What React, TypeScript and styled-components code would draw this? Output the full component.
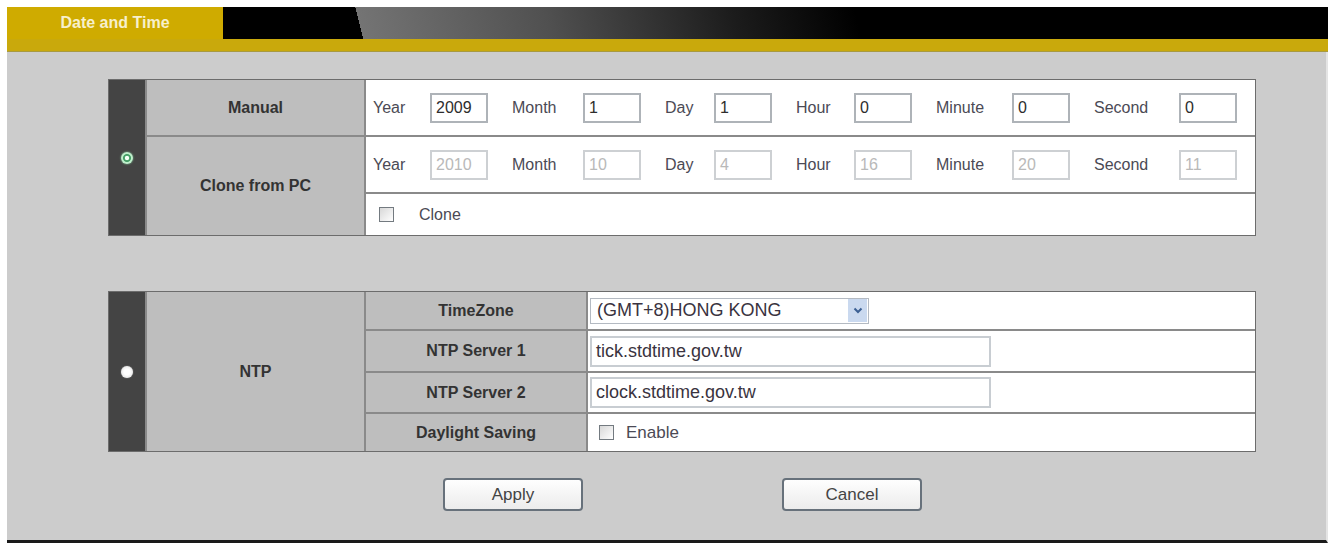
import React from "react";
import styled, { createGlobalStyle } from "styled-components";

const Global = createGlobalStyle`
  html, body { margin: 0; padding: 0; background: #ffffff; }
  body { font-family: "Liberation Sans", Arial, sans-serif; }
  * { box-sizing: border-box; }
`;

const Frame = styled.div`
  margin: 7px 1px 0 7px;
  width: 1321px;
`;

const Header = styled.div`
  display: flex;
  height: 32px;
  background: #000;
`;

const Tab = styled.div`
  width: 216px;
  background: #cfab00;
  color: #f7f0cc;
  font-weight: bold;
  font-size: 16px;
  display: flex;
  align-items: center;
  justify-content: center;
  padding-bottom: 1px;
`;

const Banner = styled.div`
  flex: 1;
  background: linear-gradient(
    76deg,
    #000 0,
    #000 136px,
    #747474 136px,
    #505050 320px,
    #1c1c1c 500px,
    #000 620px
  );
`;

const Stripe = styled.div`
  height: 13px;
  background: #c9a90c;
  border-bottom: 1px solid #a89a40;
`;

const Content = styled.div`
  background: #cccccc;
  padding: 27px 0 29px 101px;
  border-bottom: 3px solid #1a1a1a;
  border-right: 2px solid #e4e4e4;
`;

const Grid = styled.div<{ $cols: string; $rows: string }>`
  width: 1148px;
  display: grid;
  grid-template-columns: ${(p) => p.$cols};
  grid-template-rows: ${(p) => p.$rows};
  gap: 2px;
  background: #8a8a8a;
  border: 1px solid #6c6c6c;
`;

const DarkCell = styled.div<{ $span: number }>`
  grid-row: 1 / span ${(p) => p.$span};
  background: #444444;
  display: flex;
  align-items: center;
  justify-content: center;
`;

const LabelCell = styled.div<{ $span?: number }>`
  grid-row: span ${(p) => p.$span || 1};
  background: #bebebe;
  color: #333;
  font-weight: bold;
  font-size: 16px;
  display: flex;
  align-items: center;
  justify-content: center;
`;

const ValueCell = styled.div<{ $pad?: number }>`
  background: #ffffff;
  display: flex;
  align-items: center;
  min-width: 0;
  padding-left: ${(p) => p.$pad ?? 7}px;
`;

const Radio = styled.span<{ $on?: boolean }>`
  width: 12px;
  height: 12px;
  border-radius: 50%;
  display: block;
  background: ${(p) =>
    p.$on
      ? "radial-gradient(circle, #f4fff6 0 1.8px, #47a068 2.6px 3.6px, #bff0cc 4.4px)"
      : "radial-gradient(circle, #ffffff 0 3px, #f0f0f0 5px)"};
  box-shadow: ${(p) => (p.$on ? "0 0 2px #8fdcaa" : "0 0 1px #ddd")};
`;

const FieldLabel = styled.span<{ $w: number }>`
  width: ${(p) => p.$w}px;
  flex: none;
  font-size: 16px;
  color: #4b4a55;
`;

const NumInput = styled.div<{ $disabled?: boolean }>`
  width: 58px;
  height: 30px;
  flex: none;
  margin-right: 24px;
  border: 2px solid ${(p) => (p.$disabled ? "#cdd0d3" : "#aeb3b8")};
  background: #fff;
  color: ${(p) => (p.$disabled ? "#b9b9b9" : "#2d2d2d")};
  font-size: 16px;
  display: flex;
  align-items: center;
  padding-left: 4px;
  &:last-child {
    margin-right: 0;
  }
`;

const Check = styled.span`
  width: 15px;
  height: 15px;
  flex: none;
  border: 1px solid #737a80;
  background: linear-gradient(135deg, #d8d8d8, #ffffff);
`;

const CheckText = styled.span<{ $gap: number; $size: number }>`
  margin-left: ${(p) => p.$gap}px;
  font-size: ${(p) => p.$size}px;
  color: #4b4a55;
`;

const Select = styled.div`
  width: 279px;
  height: 26px;
  border: 1px solid #b4bac2;
  display: flex;
  align-items: center;
  justify-content: space-between;
  padding-left: 6px;
  font-size: 18px;
  color: #3a3340;
`;

const Arrow = styled.span`
  width: 19px;
  height: 23px;
  background: #cad9ef;
  display: flex;
  align-items: center;
  justify-content: center;
  margin-right: 1px;
`;

const TextInput = styled.div`
  width: 401px;
  height: 31px;
  border: 2px solid #c8cdd2;
  display: flex;
  align-items: center;
  padding-left: 4px;
  font-size: 18px;
  color: #3a3340;
`;

const Spacer = styled.div<{ $h: number }>`
  height: ${(p) => p.$h}px;
`;

const Buttons = styled.div`
  display: flex;
  gap: 199px;
  padding-left: 335px;
`;

const Button = styled.button`
  width: 140px;
  height: 33px;
  border: 2px solid #67717b;
  border-radius: 4px;
  background: linear-gradient(#fefefe, #ececec);
  color: #444;
  font-family: "Liberation Sans", Arial, sans-serif;
  font-size: 17px;
  padding: 0;
`;

const fields: [string, number, string][] = [
  ["Year", 57, "2009"],
  ["Month", 71, "1"],
  ["Day", 49, "1"],
  ["Hour", 58, "0"],
  ["Minute", 76, "0"],
  ["Second", 85, "0"],
];
const cloneValues = ["2010", "10", "4", "16", "20", "11"];

function TimeRow({ values, disabled }: { values: string[]; disabled?: boolean }) {
  return (
    <ValueCell>
      {fields.map(([label, w], i) => (
        <React.Fragment key={label}>
          <FieldLabel $w={w}>{label}</FieldLabel>
          <NumInput $disabled={disabled}>{values[i]}</NumInput>
        </React.Fragment>
      ))}
    </ValueCell>
  );
}

export default function App() {
  return (
    <>
      <Global />
      <Frame>
        <Header>
          <Tab>Date and Time</Tab>
          <Banner />
        </Header>
        <Stripe />
        <Content>
          <Grid $cols="36px 217px minmax(0, 1fr)" $rows="55px 55px 41px">
            <DarkCell $span={3}>
              <Radio $on />
            </DarkCell>
            <LabelCell>Manual</LabelCell>
            <TimeRow values={fields.map((f) => f[2])} />
            <LabelCell $span={2}>Clone from PC</LabelCell>
            <TimeRow values={cloneValues} disabled />
            <ValueCell $pad={13}>
              <Check />
              <CheckText $gap={25} $size={16}>
                Clone
              </CheckText>
            </ValueCell>
          </Grid>
          <Spacer $h={55} />
          <Grid $cols="36px 217px 220px minmax(0, 1fr)" $rows="37px 40px 39px 37px">
            <DarkCell $span={4}>
              <Radio />
            </DarkCell>
            <LabelCell $span={4}>NTP</LabelCell>
            <LabelCell>TimeZone</LabelCell>
            <ValueCell $pad={2}>
              <Select>
                (GMT+8)HONG KONG
                <Arrow>
                  <svg width="10" height="7" viewBox="0 0 10 7">
                    <path d="M1.5 1.5 L5 5 L8.5 1.5" fill="none" stroke="#3b5f93" strokeWidth="2" />
                  </svg>
                </Arrow>
              </Select>
            </ValueCell>
            <LabelCell>NTP Server 1</LabelCell>
            <ValueCell $pad={2}>
              <TextInput>tick.stdtime.gov.tw</TextInput>
            </ValueCell>
            <LabelCell>NTP Server 2</LabelCell>
            <ValueCell $pad={2}>
              <TextInput>clock.stdtime.gov.tw</TextInput>
            </ValueCell>
            <LabelCell>Daylight Saving</LabelCell>
            <ValueCell $pad={11}>
              <Check />
              <CheckText $gap={12} $size={17}>
                Enable
              </CheckText>
            </ValueCell>
          </Grid>
          <Spacer $h={26} />
          <Buttons>
            <Button>Apply</Button>
            <Button>Cancel</Button>
          </Buttons>
        </Content>
      </Frame>
    </>
  );
}
